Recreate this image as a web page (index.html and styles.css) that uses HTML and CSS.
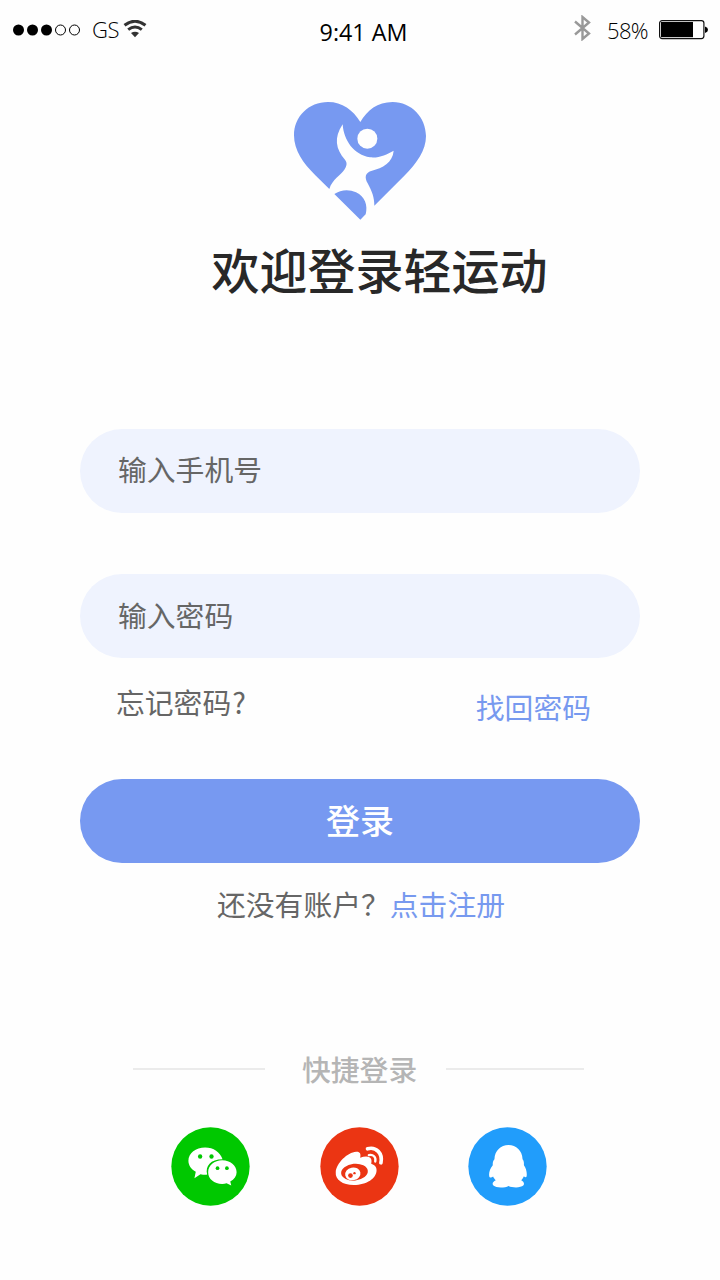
FILE: index.html
```
<!DOCTYPE html>
<html lang="zh-CN">
<head>
  <meta charset="UTF-8">
  <meta name="viewport" content="width=device-width, initial-scale=1.0">
  <title>轻运动 - 登录</title>
  <link rel="stylesheet" href="styles.css">
</head>
<body>
  <header class="status-bar">
    <div class="status-left">
      <svg class="signal" width="68" height="12" viewBox="0 0 68 12">
        <circle cx="5.5" cy="6" r="5.5"/>
        <circle cx="19.5" cy="6" r="5.5"/>
        <circle cx="33.5" cy="6" r="5.5"/>
        <circle class="empty" cx="47.5" cy="6" r="5"/>
        <circle class="empty" cx="61.5" cy="6" r="5"/>
      </svg>
      <span class="carrier">GS</span>
      <svg class="wifi" width="24" height="18" viewBox="0 0 24 18">
        <path class="arc" d="M1.5 5.3Q12 -2.8 22.5 5.3"/>
        <path class="arc" d="M5.2 9.7Q12 4.3 18.8 9.7"/>
        <path d="M8 13Q12 10.3 16 13L12 17.3Z"/>
      </svg>
    </div>
    <div class="time">9:41 AM</div>
    <div class="status-right">
      <svg class="bluetooth" width="18" height="26" viewBox="0 0 18 26">
        <path d="M1 6.5L15 18.5L8.5 24V2L15 7.5L1 19.5"/>
      </svg>
      <span class="percent">58%</span>
      <svg class="battery" width="50" height="20" viewBox="0 0 50 20">
        <rect class="case" x="0.6" y="0.6" width="44.3" height="18" rx="2.5"/>
        <rect x="2" y="2" width="32" height="15.2"/>
        <path d="M46 6.5Q49 7.5 49 9.7T46 13Z"/>
      </svg>
    </div>
  </header>

  <main class="login">
    <svg class="logo" width="132" height="118" viewBox="42 36 396 354">
      <path class="heart" d="M241 96C219 60 187 36 144 36C86 36 42 80 42 136C42 181 69 219 106 256L148 297C157 267 182 256 193 239C201 227 202 218 195 209C167 178 161 143 188 103C191 151 222 195 270 202C296 205 320 194 341 182C338 218 307 234 276 242C255 248 253 261 263 280C276 304 283 322 283 347L373 257C411 219 438 181 438 138C438 82 394 36 338 36C292 36 262 61 241 96Z"/>
      <circle class="head" cx="262" cy="146" r="30"/>
      <path class="heart" d="M163 312C182 299 207 297 228 307C255 319 264 347 257 373L241 389Z"/>
    </svg>
    <h1>欢迎登录轻运动</h1>

    <form class="login-form">
      <input class="phone" type="text" placeholder="输入手机号">
      <input class="password" type="password" placeholder="输入密码">
      <div class="forgot">
        <span>忘记密码<span class="mark">?</span></span>
        <a class="find" href="#">找回密码</a>
      </div>
      <button class="button" type="button">登录</button>
    </form>
    <p class="register">还没有账户？<a href="#">点击注册</a></p>

    <div class="divider">
      <span class="line"></span>
      <span class="divider-text">快捷登录</span>
      <span class="line line-right"></span>
    </div>

    <div class="social">
      <a href="#" aria-label="微信">
        <svg width="79" height="79" viewBox="35 35 236 236">
          <circle cx="153" cy="153" r="117" fill="#00c800"/>
          <path fill="#fff" d="M137 96C109 96 87 113 87 136C87 150 96 162 109 169L105 188L123 176Q137 179 143 177C137 151 153 131 189 131C182 110 162 96 137 96Z"/>
          <path fill="#fff" d="M188 134C164 134 146 149 146 170C146 190 164 205 188 205Q195 205 201 203L215 210L212 198C224 191 231 182 231 170C231 149 212 134 188 134Z"/>
          <g fill="#00c800">
            <circle cx="122" cy="123" r="6.5"/>
            <circle cx="156" cy="123" r="6.5"/>
            <circle cx="174" cy="158" r="5.5"/>
            <circle cx="202" cy="158" r="5.5"/>
          </g>
        </svg>
      </a>
      <a href="#" aria-label="微博">
        <svg width="79" height="79" viewBox="31 35 236 236">
          <circle cx="149" cy="153" r="117" fill="#eb3513"/>
          <path fill="#fff" d="M78 170C80 143 113 111 139 109C150 108 154 115 151 127C166 121 181 122 184 131C186 137 184 142 184 145C193 148 200 153 200 164C200 188 171 208 132 208C98 208 76 192 78 170Z"/>
          <ellipse cx="134" cy="170" rx="40" ry="25" fill="#eb3513" transform="rotate(-6 134 170)"/>
          <ellipse cx="129" cy="175" rx="23" ry="19" fill="#fff" transform="rotate(-12 129 175)"/>
          <circle cx="122" cy="180" r="7" fill="#eb3513"/>
          <circle cx="134" cy="173" r="3.5" fill="#eb3513"/>
          <g fill="none" stroke="#fff" stroke-linecap="round">
            <path stroke-width="11" d="M173 100C199 93 219 114 213 142"/>
            <path stroke-width="7" d="M177 119C190 116 199 125 196 138"/>
          </g>
        </svg>
      </a>
      <a href="#" aria-label="QQ">
        <svg width="79" height="79" viewBox="32 35 236 236">
          <circle cx="150" cy="153" r="117" fill="#219dfb"/>
          <path fill="#fff" d="M153 89C130 89 112 106 111 131C105 138 106 145 106 149C97 160 93 174 96 184C99 187 103 186 107 183C109 188 112 191 115 194C106 198 103 205 108 210C116 218 143 217 153 211C164 217 190 217 197 210C202 204 198 198 191 194C195 190 197 186 199 182C202 186 206 186 207 183C209 172 206 159 199 149C199 143 200 137 195 131C194 106 176 89 153 89Z"/>
        </svg>
      </a>
    </div>
  </main>
</body>
</html>
```

FILE: styles.css
```
* {
  box-sizing: border-box;
}

body {
  margin: 0;
  width: 720px;
  height: 1280px;
  overflow: hidden;
  background: #fefefe;
  color: #666;
  font-family: "Noto Sans CJK SC", sans-serif;
  font-size: 28.8px;
}

a {
  color: #7799ef;
  text-decoration: none;
}

.status-bar {
  display: grid;
  grid-template-columns: 1fr auto 1fr;
  height: 60px;
  padding: 0 11px 0 13px;
  color: #000;
  font-family: "Open Sans", "Noto Sans", sans-serif;
  font-size: 23px;
  line-height: 60px;
}

.status-left,
.status-right {
  display: flex;
  align-items: center;
  height: 59px;
}

.status-right {
  justify-content: flex-end;
}

.signal .empty {
  fill: none;
  stroke: #000;
}

.carrier {
  margin: -2px 0 0 11px;
  font-size: 22px;
  font-weight: 300;
  letter-spacing: -0.3px;
}

.wifi {
  margin: -2px 0 0 4px;
  fill: #333;
}

.wifi .arc {
  fill: none;
  stroke: #333;
  stroke-width: 3;
}

.time {
  padding: 2px 0 0 5px;
  font-size: 23.3px;
}

.bluetooth {
  margin-bottom: 4px;
  fill: none;
  stroke: #999;
  stroke-width: 2.4;
}

.percent {
  margin: 0 11px 0 15px;
  font-size: 22px;
  font-weight: 300;
  letter-spacing: -0.6px;
}

.battery .case {
  fill: none;
  stroke: #111;
  stroke-width: 1.2;
}

.login {
  display: flex;
  flex-direction: column;
  align-items: center;
  padding-top: 42px;
}

.logo .heart {
  fill: #7799f1;
}

.logo .head {
  fill: #fefefe;
}

h1 {
  margin: 18px 0 0 39px;
  color: #282828;
  font-size: 48px;
  font-weight: 500;
  line-height: 60px;
}

.login-form {
  display: flex;
  flex-direction: column;
  width: 560px;
  margin-top: 131px;
}

input {
  height: 84px;
  padding: 0 38px 5px;
  border: none;
  border-radius: 42px;
  outline: none;
  background: #eff3fe;
  color: #666;
  font: inherit;
}

input::placeholder {
  color: #666;
  opacity: 1;
}

.password {
  margin-top: 61px;
  padding-bottom: 3px;
}

.forgot {
  display: flex;
  justify-content: space-between;
  height: 121px;
  padding: 24px 49px 0 36px;
  line-height: 40px;
}

.mark {
  margin-left: 1px;
}

.find {
  padding-top: 5px;
}

.button {
  height: 84px;
  padding: 0 0 3px;
  border: none;
  border-radius: 42px;
  background: #7799f1;
  color: #fff;
  font-family: inherit;
  font-size: 34px;
  font-weight: 500;
}

.register {
  margin: 21px 0 0 2px;
  line-height: 40px;
}

.divider {
  display: flex;
  align-items: center;
  width: 451px;
  margin: 125px 3px 0 0;
  color: #b5b5b5;
  font-weight: 500;
  line-height: 40px;
}

.line {
  flex: none;
  width: 132px;
  height: 2px;
  background: #ebebeb;
}

.line-right {
  width: 138px;
}

.divider-text {
  flex: 1;
  padding-left: 37px;
  white-space: nowrap;
}

.social {
  display: flex;
  gap: 69.5px;
  margin: 38px 2px 0 0;
}

.social svg {
  display: block;
}
```
